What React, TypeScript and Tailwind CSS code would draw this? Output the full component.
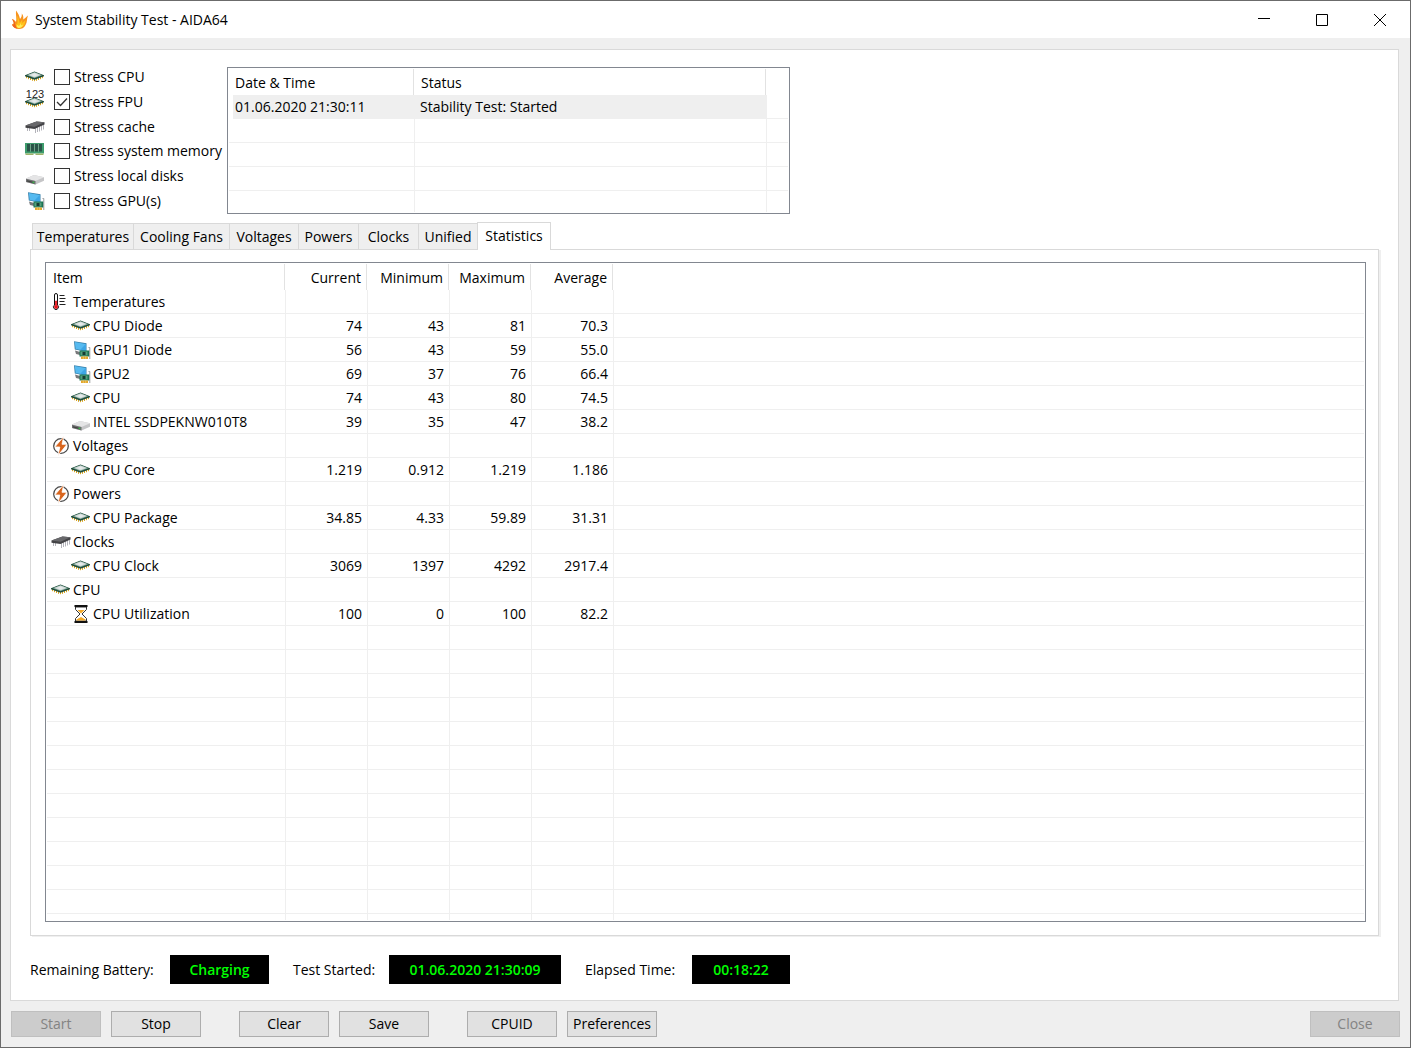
import React, { useState } from 'react';

type IconName = 'chip' | 'fpu' | 'cache' | 'ram' | 'disk' | 'gpu' | 'thermo' | 'bolt' | 'hourglass';

function ChipArt() {
  return (
    <>
      <path
        d="M1.500 9v2.200M3.500 10v2.200M5.500 11v2M7.500 11.500v2.300M9.500 12v2.200M11.500 11.500v2.300M13.500 11v2M15.500 10v2.200M17.500 9v2.200"
        stroke="#d9a41c"
      />
      <path d="M0 8.300 9.500 4.500 19 8.300v1L9.500 12.800 0 9.300z" fill="#1d4a39" />
      <path d="M1.500 8.200 9.500 5 17.500 8.200 9.500 11.300z" fill="#6a9685" />
      <path d="M3 8.100 9.500 5.600 16 8.100 9.500 10.600z" fill="#d3dbda" />
      <path d="M6 8 9.500 6.600 13 8 9.500 9.400z" fill="#e6ebea" />
    </>
  );
}

function Icon({ name }: { name: IconName }) {
  if (name === 'fpu') {
    return (
      <span className="relative block h-5 w-5 shrink-0" aria-hidden="true">
        <span className="absolute -top-[3px] left-0 w-5 text-center font-['Liberation_Sans',sans-serif] text-[11px] leading-[11px] text-[#222]">
          123
        </span>
        <svg viewBox="0 -1 20 20" className="block h-5 w-5">
          <ChipArt />
        </svg>
      </span>
    );
  }
  return (
    <svg viewBox="0 0 20 20" className="block h-5 w-5 shrink-0" fill="none" aria-hidden="true">
      {name === 'chip' && <ChipArt />}
      {name === 'cache' && (
        <>
          <path
            d="M10.500 10v6M12.500 9.500v5.500M14.500 9v5.500M16.500 8v5.500M18.500 7.500v5M2.500 11v3M4.500 11v3"
            stroke="#b3b3ba"
            strokeWidth="1"
          />
          <path d="M0.500 8.500 11.500 4.500 19.500 5.200v2.300L9.500 12 0.500 10.800z" fill="#434346" />
          <path d="M0.500 8.500 11.500 4.500 19.500 5.200 9.500 9.800z" fill="#68686b" />
        </>
      )}
      {name === 'ram' && (
        <>
          <path d="M0 2h19v10.500H0z" fill="#3d9c6d" />
          <path d="M0.500 12.500h8V14h-8zM10.500 12.500h8V14h-8z" fill="#9db36a" />
          <path d="M2 3h3v7.500H2zM6 3h3v7.500H6zM10 3h3v7.500h-3zM14 3h3v7.500h-3z" fill="#2a5548" />
          <path d="M5.500 3v7.500M9.500 3v7.500M13.500 3v7.500" stroke="#8fa79a" strokeWidth="0.600" />
        </>
      )}
      {name === 'disk' && (
        <>
          <path d="M1 12.500 9 9 19 11.200v3.600L10.500 18.500 1 16z" fill="#c5c5c7" />
          <path d="M1 12.500 9 9 19 11.200 10.500 15z" fill="#e5e5e6" />
          <path d="M1 12.800 10.500 15v3.500L1 16z" fill="#6f6f71" />
          <path d="M2 14.200 9 16v1.300L2 15.500z" fill="#424543" />
          <path d="M7.500 15.600h1.800v1.500H7.500z" fill="#38b548" />
        </>
      )}
      {name === 'gpu' && (
        <>
          <path d="M4 10.500 9 12v3l-4-1z" fill="#77787a" />
          <path d="M3 1.300 15.500 3.300v8.500L3.800 9.600z" fill="#367fa9" />
          <path d="M3.800 2.100 14.800 4v6.900L4.600 9z" fill="#56baf0" />
          <path d="M14.800 4v6.900L9 9.900z" fill="#3da5e4" />
          <path d="M8.500 10.500h10v6h-10z" fill="#1a7352" />
          <path d="M9.500 11.500h7v4h-7z" fill="#55a17d" />
          <path d="M11.500 12h3v3h-3z" fill="#173c32" />
          <path d="M10 16.500h7V19h-7z" fill="#e3a62b" />
          <path d="M12.300 16.500V19M14.700 16.500V19" stroke="#f4dc87" strokeWidth="0.600" />
          <path d="M17.500 7.500h1.300V19" stroke="#9a9d9f" />
        </>
      )}
      {name === 'thermo' && (
        <>
          <path d="M3.500 3a1.500 1.500 0 0 1 3 0V13a2.500 2.500 0 1 1-3 0z" fill="#fff" stroke="#111" />
          <path d="M4.500 9h1.200v4.300a1.600 1.600 0 1 1-1.200 0z" fill="#e8141c" stroke="#e8141c" strokeWidth="0.800" />
          <path d="M8.500 3.500h5M8.500 6.500h6M8.500 9.500h5M8.500 12.500h6" stroke="#222" />
        </>
      )}
      {name === 'bolt' && (
        <>
          <circle cx="10" cy="10" r="7.300" stroke="#4a4a4a" strokeWidth="1.300" />
          <path d="M12.800 0.500 3.800 11h5L7 19.500 16 8.300h-5z" fill="#d9651d" stroke="#fff" strokeWidth="0.800" />
        </>
      )}
      {name === 'hourglass' && (
        <>
          <path d="M4.500 3v2.500L9 10l-4.500 4.500V17h11v-2.500L11 10l4.500-4.500V3z" fill="#fff" stroke="#333" />
          <path d="M6.500 6h7L10 9.500zM5.500 16.500v-1L10 13l4.500 2.500v1z" fill="#f3a92a" />
          <path d="M3.500 2h13M3.500 18h13" stroke="#111" strokeWidth="2" />
        </>
      )}
    </svg>
  );
}

const stressItems: { icon: IconName; label: string; on?: boolean }[] = [
  { icon: 'chip', label: 'Stress CPU' },
  { icon: 'fpu', label: 'Stress FPU', on: true },
  { icon: 'cache', label: 'Stress cache' },
  { icon: 'ram', label: 'Stress system memory' },
  { icon: 'disk', label: 'Stress local disks' },
  { icon: 'gpu', label: 'Stress GPU(s)' },
];

const tabs = [
  { label: 'Temperatures', width: 'w-[101px]' },
  { label: 'Cooling Fans', width: 'w-[96px]' },
  { label: 'Voltages', width: 'w-[69px]' },
  { label: 'Powers', width: 'w-[60px]' },
  { label: 'Clocks', width: 'w-[60px]' },
  { label: 'Unified', width: 'w-[59px]' },
  { label: 'Statistics', width: 'w-[74px]' },
];

const rows: { icon: IconName; label: string; values?: string[] }[] = [
  { icon: 'thermo', label: 'Temperatures' },
  { icon: 'chip', label: 'CPU Diode', values: ['74', '43', '81', '70.3'] },
  { icon: 'gpu', label: 'GPU1 Diode', values: ['56', '43', '59', '55.0'] },
  { icon: 'gpu', label: 'GPU2', values: ['69', '37', '76', '66.4'] },
  { icon: 'chip', label: 'CPU', values: ['74', '43', '80', '74.5'] },
  { icon: 'disk', label: 'INTEL SSDPEKNW010T8', values: ['39', '35', '47', '38.2'] },
  { icon: 'bolt', label: 'Voltages' },
  { icon: 'chip', label: 'CPU Core', values: ['1.219', '0.912', '1.219', '1.186'] },
  { icon: 'bolt', label: 'Powers' },
  { icon: 'chip', label: 'CPU Package', values: ['34.85', '4.33', '59.89', '31.31'] },
  { icon: 'cache', label: 'Clocks' },
  { icon: 'chip', label: 'CPU Clock', values: ['3069', '1397', '4292', '2917.4'] },
  { icon: 'chip', label: 'CPU' },
  { icon: 'hourglass', label: 'CPU Utilization', values: ['100', '0', '100', '82.2'] },
];

const cell = 'h-6 border-b border-r border-[#efefef] p-0';
const lastCell = 'h-6 border-b border-[#efefef] p-0';

function HeaderCell({ children, right }: { children: React.ReactNode; right?: boolean }) {
  return (
    <th scope="col" className="h-[26px] p-0 pr-px font-normal">
      <div className={`h-[26px] border-r border-[#e2e2e2] leading-[28px] ${right ? 'pr-[5px] text-right' : 'pl-[6px] text-left'}`}>
        {children}
      </div>
    </th>
  );
}

function StatusLog() {
  return (
    <div className="w-[563px] border border-[#828790] p-px">
      <table className="w-full table-fixed border-separate border-spacing-0">
        <colgroup>
          <col className="w-[186px]" />
          <col className="w-[352px]" />
          <col />
        </colgroup>
        <thead>
          <tr>
            <HeaderCell>Date &amp; Time</HeaderCell>
            <HeaderCell>Status</HeaderCell>
            <td />
          </tr>
        </thead>
        <tbody>
          <tr>
            <td className="h-6 p-0 pl-1">
              <div className="h-6 bg-[#efefef] pl-[2px] font-medium leading-6">01.06.2020 21:30:11</div>
            </td>
            <td className="h-6 bg-[#efefef] p-0 pl-[5px] leading-6">Stability Test: Started</td>
            <td className={lastCell} />
          </tr>
          {[0, 1, 2].map((i) => (
            <tr key={i}>
              <td className={cell} />
              <td className={cell} />
              <td className={lastCell} />
            </tr>
          ))}
          <tr>
            <td className="h-[21px] border-r border-[#efefef] p-0" />
            <td className="h-[21px] border-r border-[#efefef] p-0" />
            <td />
          </tr>
        </tbody>
      </table>
    </div>
  );
}

function StatisticsTable() {
  return (
    <div className="border border-[#828790] p-px">
      <table className="w-full table-fixed border-separate border-spacing-0">
        <colgroup>
          <col className="w-[239px]" />
          <col className="w-[82px]" />
          <col className="w-[82px]" />
          <col className="w-[82px]" />
          <col className="w-[82px]" />
          <col />
        </colgroup>
        <thead>
          <tr>
            <HeaderCell>Item</HeaderCell>
            <HeaderCell right>Current</HeaderCell>
            <HeaderCell right>Minimum</HeaderCell>
            <HeaderCell right>Maximum</HeaderCell>
            <HeaderCell right>Average</HeaderCell>
            <td />
          </tr>
        </thead>
        <tbody>
          {rows.map((row, i) => (
            <tr key={i}>
              <td className={cell}>
                <div className={`flex h-[23px] items-center gap-[2px] ${row.values ? 'pl-6' : 'pl-1'}`}>
                  <Icon name={row.icon} />
                  <span className="whitespace-nowrap leading-6">{row.label}</span>
                </div>
              </td>
              {[0, 1, 2, 3].map((c) => (
                <td key={c} className={`${cell} pr-[5px] text-right font-medium leading-[23px]`}>
                  {row.values?.[c]}
                </td>
              ))}
              <td className={lastCell} />
            </tr>
          ))}
          {Array.from({ length: 12 }, (_, i) => (
            <tr key={`empty-${i}`}>
              {[0, 1, 2, 3, 4].map((c) => (
                <td key={c} className={cell} />
              ))}
              <td className={lastCell} />
            </tr>
          ))}
          <tr>
            {[0, 1, 2, 3, 4].map((c) => (
              <td key={c} className="h-[6px] border-r border-[#efefef] p-0" />
            ))}
            <td />
          </tr>
        </tbody>
      </table>
    </div>
  );
}

function PushButton({ children, disabled, className = '' }: { children: React.ReactNode; disabled?: boolean; className?: string }) {
  return (
    <button
      type="button"
      disabled={disabled}
      className={`h-[26px] w-[90px] whitespace-nowrap border border-[#adadad] bg-[#e1e1e1] text-center leading-6 disabled:border-[#bfbfbf] disabled:bg-[#cccccc] disabled:text-[#838383] ${className}`}
    >
      {children}
    </button>
  );
}

function Readout({ label, value, labelWidth, width }: { label: string; value: string; labelWidth: string; width: string }) {
  return (
    <div className="flex items-center">
      <span className={`whitespace-nowrap ${labelWidth}`}>{label}</span>
      <output className={`flex h-[29px] items-center justify-center bg-black font-semibold text-[#00ff00] ${width}`}>
        {value}
      </output>
    </div>
  );
}

export default function App() {
  const [checked, setChecked] = useState(stressItems.map((s) => !!s.on));
  const [active, setActive] = useState('Statistics');

  return (
    <div className="flex min-h-screen flex-col border border-[#6b6b6b] bg-[#efefef] font-['Open_Sans','Noto_Sans',sans-serif] text-[14px] leading-5 text-black">
      <header className="flex h-[37px] items-center bg-white pr-px pl-[9px]">
        <svg viewBox="0 0 20 20" className="mr-[5px] h-5 w-5" aria-hidden="true">
          <path
            d="M2 9C4 9.500 5 10.500 6 12 7 9 5.500 4.500 6 .5 8 3 9.500 6 10 9c1.500-1.500 2-3.500 1.800-5.500C13.500 5.500 13.500 7.500 13.200 9.500 14.500 8.500 16.500 7 18 5.500 16.500 9 17.500 12 15.500 15c-1.500 3-4 4-6.500 4-3 0-6-1.500-7-4.500C4.500 14 3.500 11 2 9z"
            fill="#f7931e"
          />
          <path d="M4 13c1.500 0 2.500 1 3 1.500 1-3 .5-6 0-9 1.500 2.500 2.500 4.500 2.500 7.500 1.500-1 2.500-3 2.800-4 .2 1.500 0 2.500-.3 4 1.500-.8 2.500-2 3.500-3-.5 3-.5 7-6 8-3 .3-4.500-1-5-2.500z" fill="#ffc21a" />
          <path d="M7 15c1 .3 1.500.5 2 1 1-1 1.500-2 2-3 0 1 .2 1.500 0 2.500l2-1c-.5 2-2 3.500-4 3.500-1.500 0-2.500-1.500-2-3z" fill="#fff05a" />
          <path d="M2 9C3.500 12 4.500 13 4 14.500l-2 0c1 2.500 3 4 6 4.300C5.500 17.500 6 15 5 12.500 4.500 11 3.500 9.500 2 9z" fill="#ee6220" />
        </svg>
        <h1 className="flex-1 whitespace-nowrap">System Stability Test - AIDA64</h1>
        <button type="button" aria-label="Minimize" className="grid h-[37px] w-[58px] place-items-center">
          <svg viewBox="0 0 12 12" className="h-3 w-3"><path d="M0 4.500h12" stroke="#000" /></svg>
        </button>
        <button type="button" aria-label="Maximize" className="grid h-[37px] w-[58px] place-items-center">
          <svg viewBox="0 0 12 12" className="h-3 w-3"><path d="M.5.5h11v11H.5z" fill="none" stroke="#000" /></svg>
        </button>
        <button type="button" aria-label="Close window" className="grid h-[37px] w-[58px] place-items-center">
          <svg viewBox="0 0 12 12" className="h-3 w-3"><path d="M0 0l12 12M12 0 0 12" stroke="#000" /></svg>
        </button>
      </header>

      <main className="mt-[11px] mr-[11px] ml-[9px] flex flex-1 flex-col border border-[#d9d9d9] bg-white pt-[15px] pr-[19px] pb-4 pl-[19px]">
        <section className="-ml-[5px] flex">
          <div role="group" aria-label="Stress options" className="grid h-[148px] w-[202px] grid-rows-6">
            {stressItems.map((s, i) => (
              <label key={s.label} className="flex items-center whitespace-nowrap">
                <Icon name={s.icon} />
                <span className="mr-1 ml-[9px] grid h-4 w-4">
                  <input
                    type="checkbox"
                    checked={checked[i]}
                    onChange={() => setChecked(checked.map((v, j) => (j === i ? !v : v)))}
                    className="peer col-start-1 row-start-1 h-4 w-4 appearance-none border border-[#333] bg-white"
                  />
                  <svg viewBox="0 0 16 16" className="pointer-events-none invisible col-start-1 row-start-1 h-4 w-4 peer-checked:visible">
                    <path d="M3 8 6.500 11.500 13 4.500" fill="none" stroke="#333" strokeWidth="1.300" />
                  </svg>
                </span>
                {s.label}
              </label>
            ))}
          </div>
          <div className="pt-[2px]">
            <StatusLog />
          </div>
        </section>

        <div role="tablist" className="mt-[7px] flex h-7 items-end pl-[2px]">
          {tabs.map((t) => (
            <button
              key={t.label}
              type="button"
              role="tab"
              aria-selected={t.label === active}
              onClick={() => setActive(t.label)}
              className={
                t.label === active
                  ? `relative z-10 -mb-px h-7 whitespace-nowrap border border-b-0 border-[#d9d9d9] bg-white pb-[1px] text-center ${t.width}`
                  : `h-[26px] whitespace-nowrap border-t border-l border-[#d9d9d9] bg-[#efefef] pt-[1px] text-center ${t.width}`
              }
            >
              {t.label}
            </button>
          ))}
        </div>
        <section role="tabpanel" aria-label={active} className="border border-[#d9d9d9] pt-3 pr-3 pb-[13px] pl-[14px] shadow-[2px_1px_0_#efefef]">
          <StatisticsTable />
        </section>

        <section className="mt-auto flex gap-6 pt-[19px]">
          <Readout label="Remaining Battery:" value="Charging" labelWidth="w-[140px]" width="w-[99px]" />
          <Readout label="Test Started:" value="01.06.2020 21:30:09" labelWidth="w-[96px]" width="w-[172px]" />
          <Readout label="Elapsed Time:" value="00:18:22" labelWidth="w-[107px]" width="w-[98px]" />
        </section>
      </main>

      <footer className="flex gap-[10px] p-[10px]">
        <PushButton disabled>Start</PushButton>
        <PushButton>Stop</PushButton>
        <PushButton className="ml-7">Clear</PushButton>
        <PushButton>Save</PushButton>
        <PushButton className="ml-7">CPUID</PushButton>
        <PushButton>Preferences</PushButton>
        <PushButton disabled className="ml-auto">Close</PushButton>
      </footer>
    </div>
  );
}
